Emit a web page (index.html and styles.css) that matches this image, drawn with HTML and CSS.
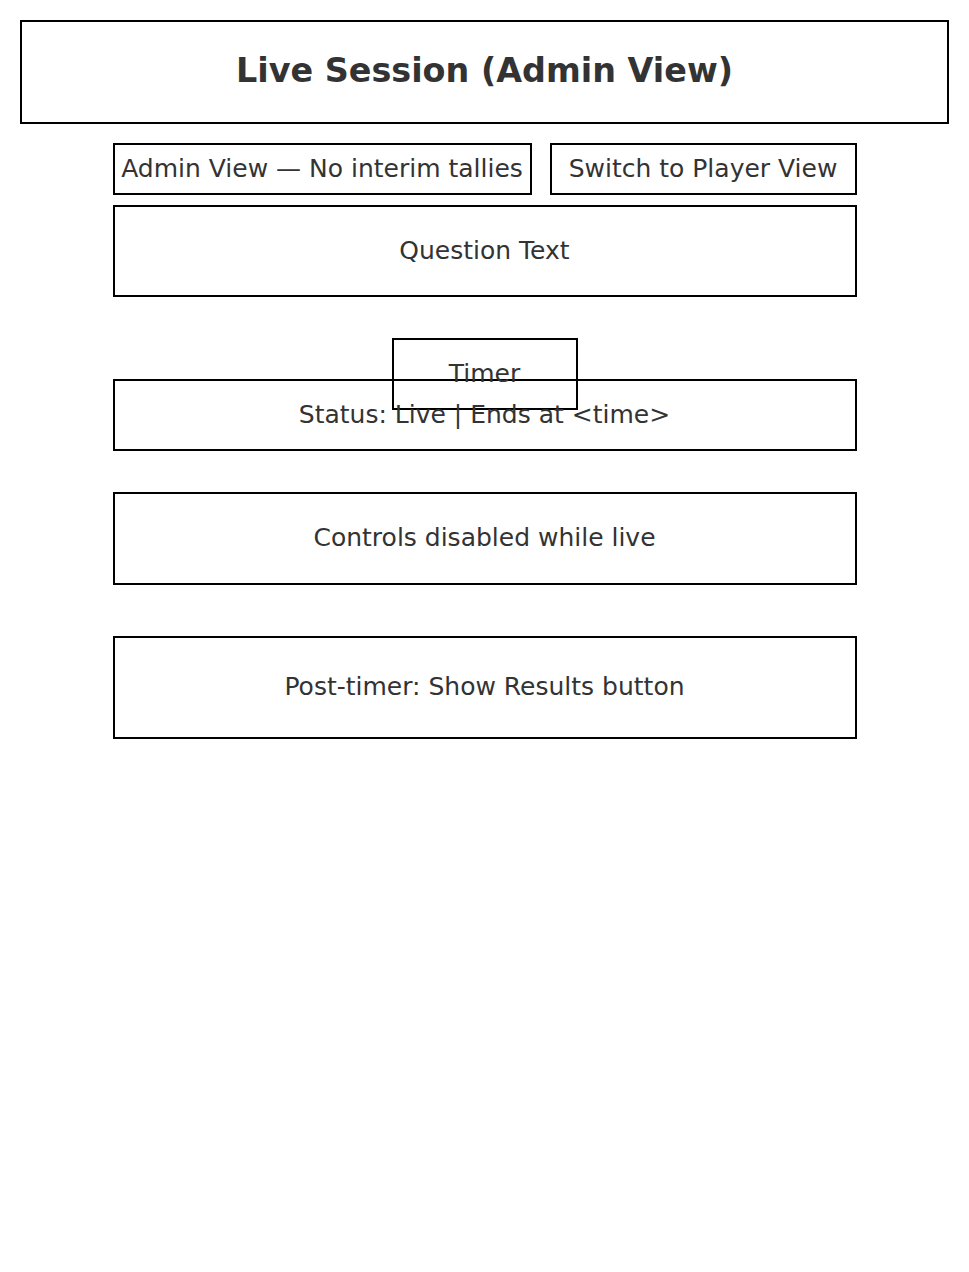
FILE: index.html
```html
<!DOCTYPE html>
<html lang="en">
<head>
  <meta charset="UTF-8">
  <title>Live Session (Admin View)</title>
  <link rel="stylesheet" href="styles.css">
</head>
<body>

  <header class="page-header">
    <h1>Live Session (Admin View)</h1>
  </header>

  <main class="session">
    <div class="view-bar">
      <div class="box view-label">Admin View — No interim tallies</div>
      <div class="box view-switch">Switch to Player View</div>
    </div>

    <div class="box question">Question Text</div>

    <div class="timer-wrap">
      <div class="box timer">Timer</div>
    </div>

    <div class="box status">Status: Live | Ends at &lt;time&gt;</div>

    <div class="box controls">Controls disabled while live</div>

    <div class="box results">Post-timer: Show Results button</div>
  </main>

</body>
</html>
```

FILE: styles.css
```css
* {
  box-sizing: border-box;
}

body {
  margin: 0;
  padding: 20px;
  background: #fff;
  color: #333;
  font-family: 'DejaVu Sans', sans-serif;
}

.page-header {
  border: 2px solid #000;
  height: 104px;
  padding-bottom: 4px;
  display: flex;
  align-items: center;
  justify-content: center;
}

.page-header h1 {
  margin: 0;
  font-size: 33.4px;
  font-weight: bold;
}

.session {
  width: 744px;
  margin: 19px auto 0;
}

.box {
  border: 2px solid #000;
  padding-bottom: 2px;
  font-size: 25px;
  white-space: nowrap;
  display: flex;
  align-items: center;
  justify-content: center;
}

.view-bar {
  display: flex;
  justify-content: space-between;
  gap: 18px;
}

.view-label,
.view-switch {
  height: 52px;
}

.view-label {
  width: 419px;
}

.view-switch {
  width: 307px;
}

.question {
  margin-top: 10px;
  height: 92px;
}

.timer-wrap {
  display: flex;
  justify-content: center;
  margin-top: 41px;
  height: 41px;
}

.timer {
  width: 186px;
  height: 72px;
  flex: none;
}

.status {
  height: 72px;
}

.controls {
  margin-top: 41px;
  height: 93px;
}

.results {
  margin-top: 51px;
  height: 103px;
}
```
